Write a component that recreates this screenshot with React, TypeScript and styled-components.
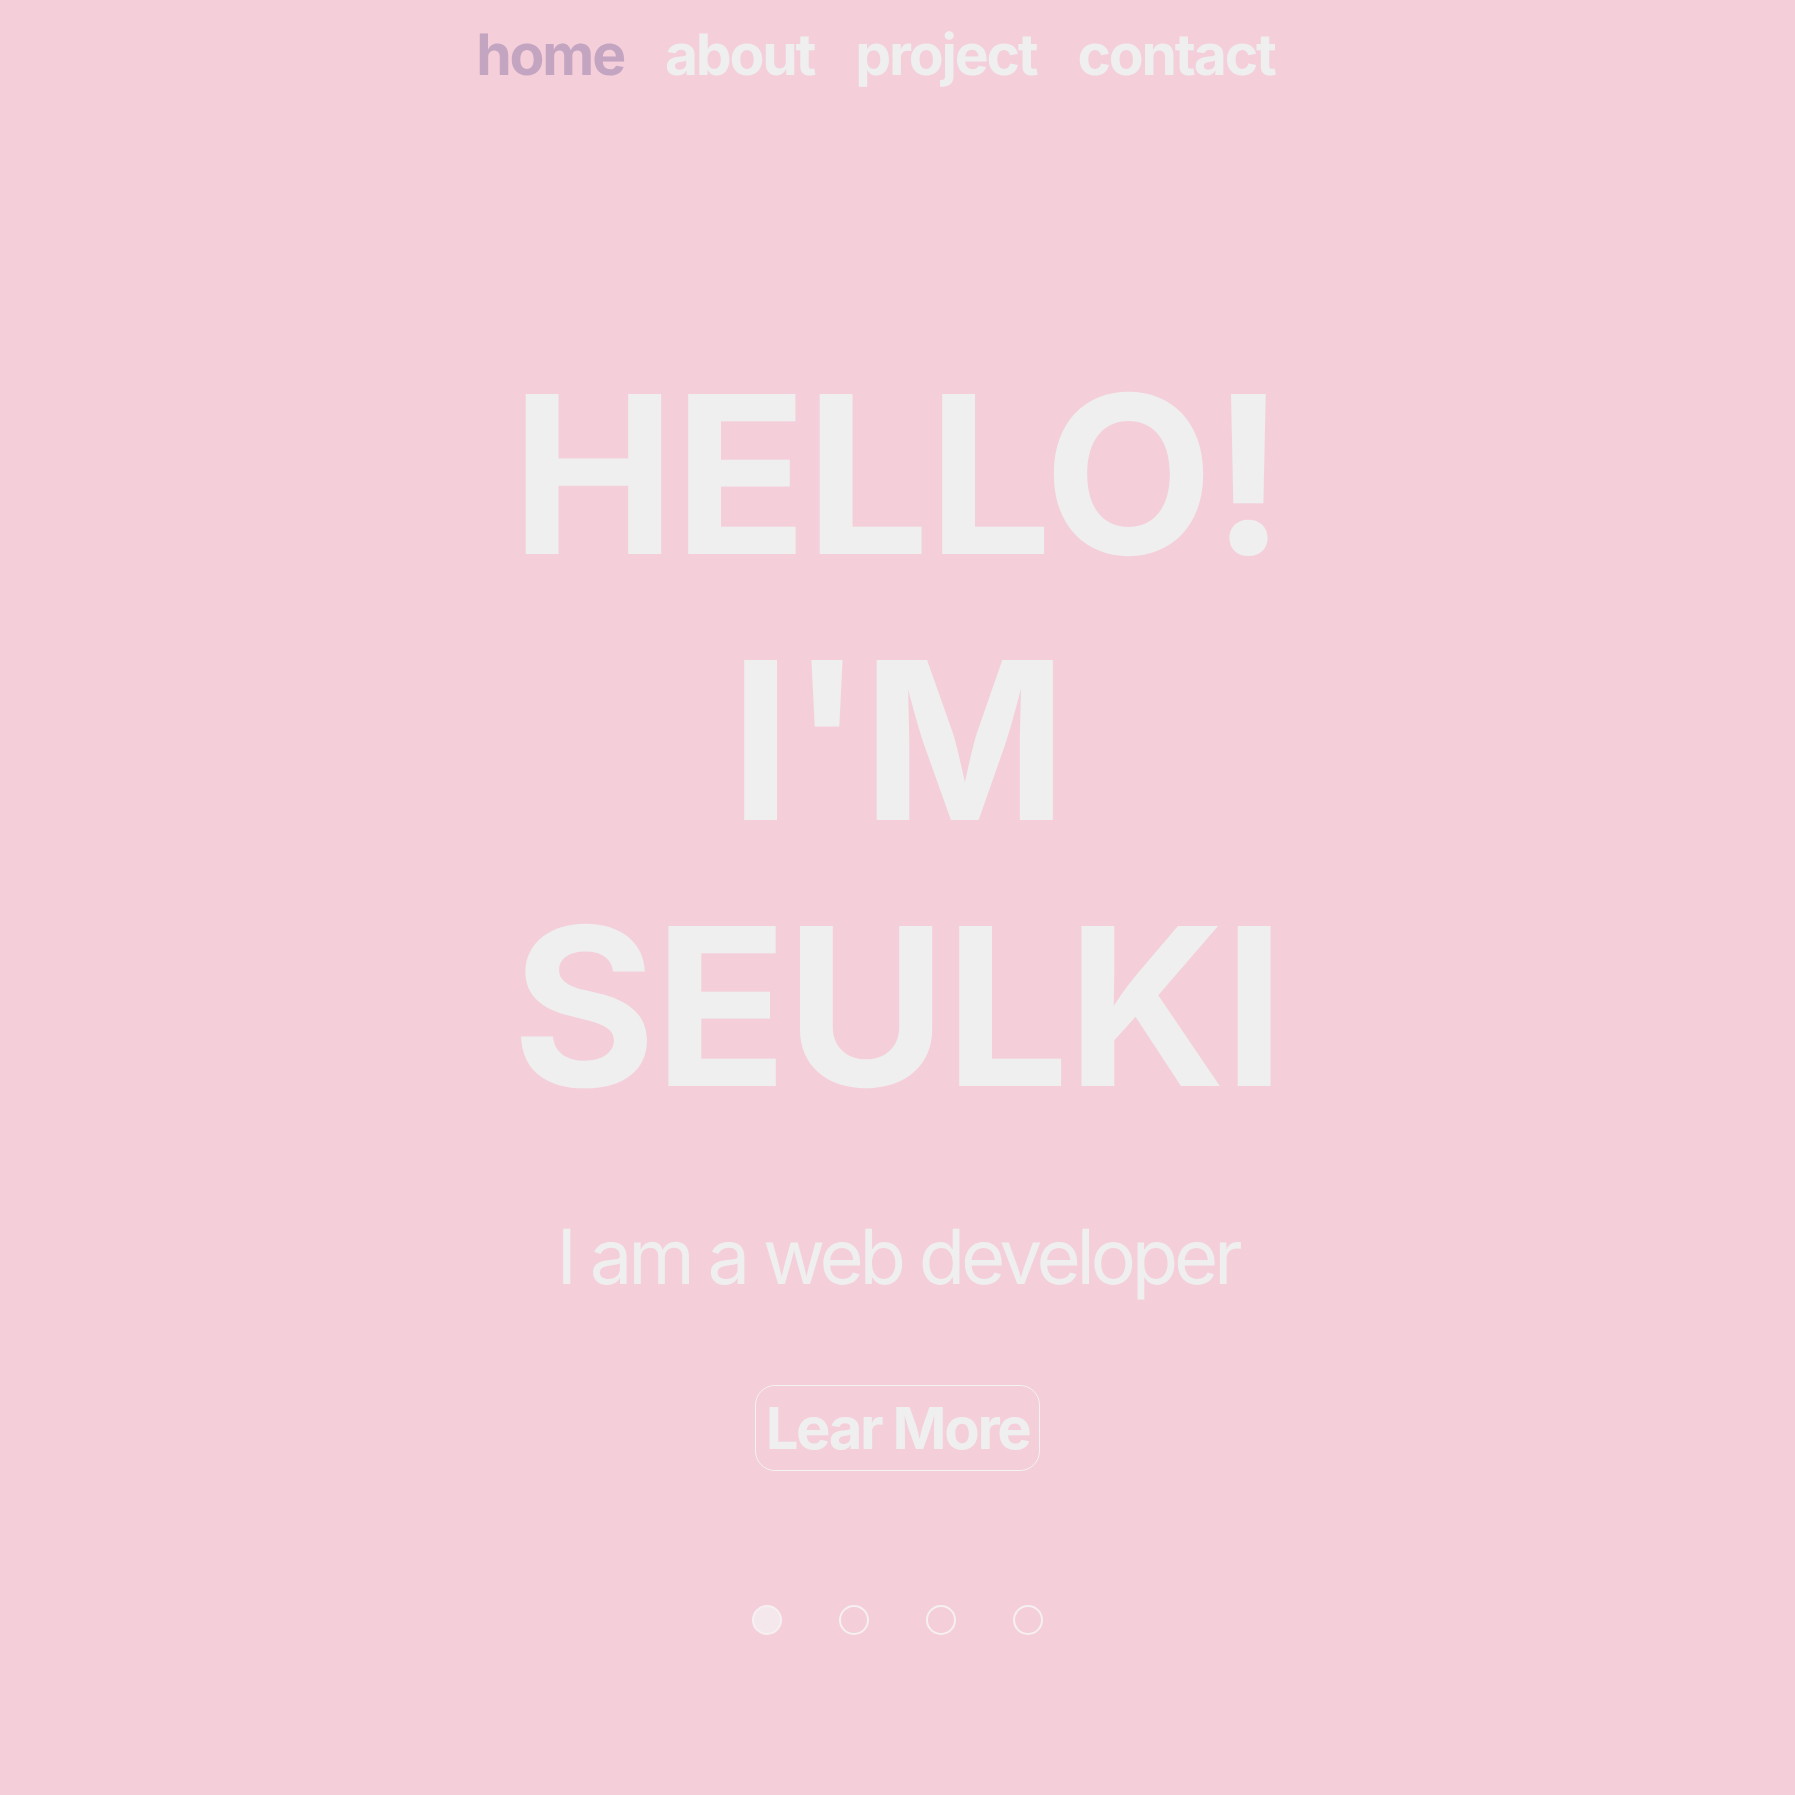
import React from "react";
import styled, { createGlobalStyle } from "styled-components";

const GlobalStyle = createGlobalStyle`
  html, body {
    margin: 0;
    padding: 0;
    background: #f4ced9;
  }
  body {
    font-family: Inter, "Noto Sans", sans-serif;
    text-rendering: geometricPrecision;
  }
`;

const Page = styled.div`
  min-height: 1795px;
  background: #f4ced9;
  display: flex;
  flex-direction: column;
  align-items: center;
`;

const Nav = styled.nav`
  display: flex;
  gap: 41px;
  padding-top: 20px;
  margin-left: -44px;
`;

const NavItem = styled.a<{ $active?: boolean }>`
  font-size: 57px;
  font-weight: 700;
  line-height: normal;
  letter-spacing: -2.2px;
  color: ${(p) => (p.$active ? "#c4a5c1" : "#efefef")};
  text-decoration: none;
  cursor: pointer;
`;

const Title = styled.h1`
  margin: 253px 0 0;
  font-size: 220px;
  font-weight: 700;
  line-height: normal;
  color: #efefef;
  text-align: center;
  letter-spacing: -2px;
`;

const Sub = styled.p`
  margin: 71px 0 0;
  font-size: 76px;
  font-weight: 400;
  line-height: normal;
  letter-spacing: -4.3px;
  color: #efefef;
`;

const MoreButton = styled.button`
  margin-top: 82px;
  padding: 7px 10px;
  border: 1px solid #f3f3f3;
  border-radius: 20px;
  background: transparent;
  font-family: Inter, sans-serif;
  font-size: 58px;
  font-weight: 700;
  line-height: normal;
  letter-spacing: -2.4px;
  color: #efefef;
  cursor: pointer;
`;

const Dots = styled.div`
  margin-top: 134px;
  display: flex;
  gap: 57px;
`;

const Dot = styled.span<{ $on?: boolean }>`
  width: 26px;
  height: 26px;
  border-radius: 50%;
  border: 2px solid #f6f0f3;
  background: ${(p) => (p.$on ? "rgba(245,240,243,0.75)" : "transparent")};
`;

const links = ["home", "about", "project", "contact"];

export default function App() {
  return (
    <Page>
      <GlobalStyle />
      <Nav>
        {links.map((l, i) => (
          <NavItem key={l} $active={i === 0}>
            {l}
          </NavItem>
        ))}
      </Nav>
      <Title>
        HELLO!
        <br />
        I'M
        <br />
        SEULKI
      </Title>
      <Sub>I am a web developer</Sub>
      <MoreButton>Lear More</MoreButton>
      <Dots>
        {links.map((l, i) => (
          <Dot key={l} $on={i === 0} />
        ))}
      </Dots>
    </Page>
  );
}
